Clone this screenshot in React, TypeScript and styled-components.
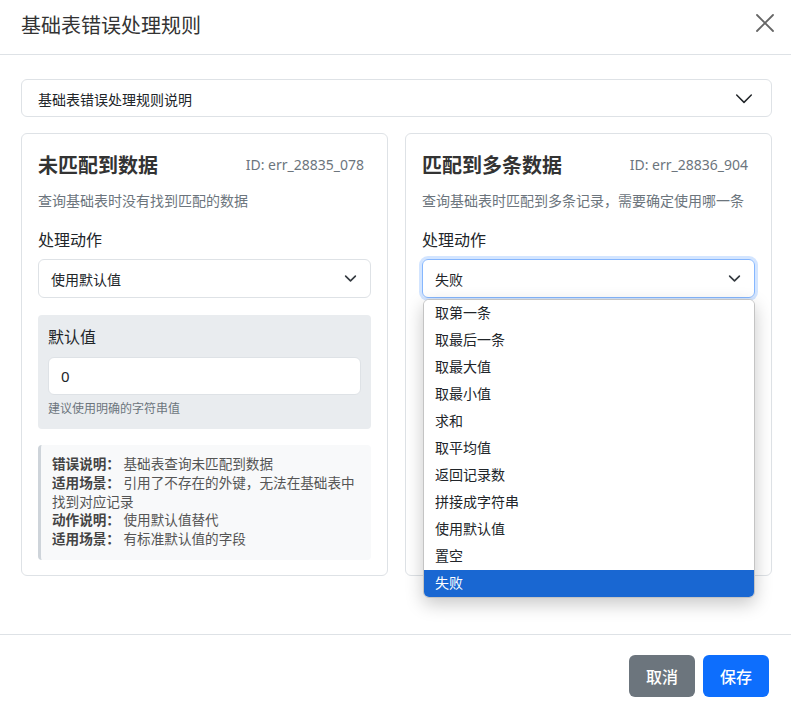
import React from "react";
import styled, { createGlobalStyle } from "styled-components";

const GlobalStyle = createGlobalStyle`
    html, body {
        margin: 0;
        padding: 0;
        background: #fff;
    }
    body {
        font-family: "Noto Sans", "Noto Sans CJK SC", sans-serif;
        color: #212529;
    }
    * {
        box-sizing: border-box;
    }
`;

const OPTIONS = [
    "取第一条",
    "取最后一条",
    "取最大值",
    "取最小值",
    "求和",
    "取平均值",
    "返回记录数",
    "拼接成字符串",
    "使用默认值",
    "置空",
    "失败",
];

function Chevron({ size = 16 }: { size?: number }) {
    return (
        <svg width={size} height={size} viewBox="0 0 16 16" fill="none">
            <path d="M2 5l6 6 6-6" stroke="#343a40" strokeWidth="2" strokeLinecap="round" strokeLinejoin="round" />
        </svg>
    );
}

function AccordionChevron() {
    return (
        <svg width="18" height="18" viewBox="0 0 16 16" fill="none">
            <path d="M1.5 4.5L8 11l6.5-6.5" stroke="#212529" strokeWidth="1.3" strokeLinecap="round" strokeLinejoin="round" />
        </svg>
    );
}

function CloseIcon() {
    return (
        <svg width="18" height="18" viewBox="0 0 18 18" fill="none">
            <path d="M1 1l16 16M17 1L1 17" stroke="#666" strokeWidth="1.8" strokeLinecap="round" />
        </svg>
    );
}

export default function App() {
    return (
        <>
            <GlobalStyle />
            <Modal>
                <Header>
                    <Title>基础表错误处理规则</Title>
                    <CloseButton aria-label="close">
                        <CloseIcon />
                    </CloseButton>
                </Header>
                <Body>
                    <Accordion>
                        <span>基础表错误处理规则说明</span>
                        <AccordionChevron />
                    </Accordion>
                    <Cards>
                        <Card>
                            <TitleRow>
                                <CardTitle>未匹配到数据</CardTitle>
                                <RuleId>ID: err_28835_078</RuleId>
                            </TitleRow>
                            <Desc>查询基础表时没有找到匹配的数据</Desc>
                            <Label>处理动作</Label>
                            <Select>
                                <span>使用默认值</span>
                                <Chevron />
                            </Select>
                            <DefaultBox>
                                <Label>默认值</Label>
                                <Input>0</Input>
                                <Help>建议使用明确的字符串值</Help>
                            </DefaultBox>
                            <InfoBox>
                                <div>
                                    <b>错误说明：</b> 基础表查询未匹配到数据
                                </div>
                                <div>
                                    <b>适用场景：</b> 引用了不存在的外键，无法在基础表中找到对应记录
                                </div>
                                <div>
                                    <b>动作说明：</b> 使用默认值替代
                                </div>
                                <div>
                                    <b>适用场景：</b> 有标准默认值的字段
                                </div>
                            </InfoBox>
                        </Card>
                        <Card>
                            <TitleRow>
                                <CardTitle>匹配到多条数据</CardTitle>
                                <RuleId>ID: err_28836_904</RuleId>
                            </TitleRow>
                            <Desc>查询基础表时匹配到多条记录，需要确定使用哪一条</Desc>
                            <Label>处理动作</Label>
                            <SelectWrap>
                                <Select $focused>
                                    <span>失败</span>
                                    <Chevron />
                                </Select>
                                <Dropdown>
                                    {OPTIONS.map((o) => (
                                        <Option key={o} $selected={o === "失败"}>
                                            {o}
                                        </Option>
                                    ))}
                                </Dropdown>
                            </SelectWrap>
                        </Card>
                    </Cards>
                </Body>
                <Footer>
                    <Button $variant="secondary">取消</Button>
                    <Button $variant="primary">保存</Button>
                </Footer>
            </Modal>
        </>
    );
}

const Modal = styled.div`
    width: 791px;
    height: 710px;
    display: flex;
    flex-direction: column;
    background: #fff;
    overflow: hidden;
`;

const Header = styled.div`
    height: 55px;
    display: flex;
    align-items: center;
    justify-content: space-between;
    padding: 0 17px 2px 21px;
    border-bottom: 1px solid #dee2e6;
`;

const Title = styled.h5`
    margin: 0;
    font-size: 20px;
    font-weight: 400;
    line-height: 24px;
    color: #333;
`;

const CloseButton = styled.button`
    border: 0;
    background: transparent;
    padding: 0;
    width: 18px;
    height: 18px;
    display: flex;
    margin-bottom: 7px;
`;

const Body = styled.div`
    padding: 24px 19px 56px 21px;
    flex: 1;
`;

const Accordion = styled.div`
    height: 38px;
    border: 1px solid #dee2e6;
    border-radius: 6px;
    display: flex;
    align-items: center;
    justify-content: space-between;
    padding: 1px 18px 0 16px;
    font-size: 14px;
    color: #212529;
    margin-bottom: 16px;
`;

const Cards = styled.div`
    display: grid;
    grid-template-columns: 367px 367px;
    gap: 17px;
`;

const Card = styled.div`
    border: 1px solid #dee2e6;
    border-radius: 6px;
    padding: 16px 16px 15px 16px;
    display: flex;
    flex-direction: column;
`;

const TitleRow = styled.div`
    display: flex;
    justify-content: space-between;
    align-items: center;
    height: 28px;
    margin-bottom: 13px;
`;

const CardTitle = styled.div`
    font-size: 20px;
    font-weight: 700;
    color: #333;
`;

const RuleId = styled.div`
    font-size: 14px;
    color: #6c757d;
    margin-right: 7px;
`;

const Desc = styled.div`
    font-size: 14px;
    line-height: 20px;
    color: #6c757d;
    margin-bottom: 18px;
`;

const Label = styled.div`
    font-size: 16px;
    line-height: 22px;
    margin-bottom: 8px;
    color: #212529;
`;

const SelectWrap = styled.div`
    position: relative;
`;

const Select = styled.div<{ $focused?: boolean }>`
    height: 39px;
    border: 1px solid ${(p) => (p.$focused ? "#86b7fe" : "#dee2e6")};
    box-shadow: ${(p) => (p.$focused ? "0 0 0 3px rgba(13, 110, 253, 0.18)" : "none")};
    border-radius: 6px;
    display: flex;
    align-items: center;
    justify-content: space-between;
    padding: 0 13px 0 12px;
    font-size: 14px;
    color: #212529;
    margin-bottom: 17px;
    svg {
        width: 13px;
        height: 13px;
    }
`;

const Dropdown = styled.div`
    position: absolute;
    top: 40px;
    left: 1px;
    right: 0;
    background: #fff;
    border: 1px solid #c4c4c4;
    border-radius: 6px;
    overflow: hidden;
    box-shadow: 0 6px 18px rgba(0, 0, 0, 0.22);
    z-index: 10;
`;

const Option = styled.div<{ $selected?: boolean }>`
    height: 27px;
    display: flex;
    align-items: center;
    padding: 0 0 3px 11px;
    font-size: 14px;
    color: ${(p) => (p.$selected ? "#fff" : "#212529")};
    background: ${(p) => (p.$selected ? "#1967d2" : "#fff")};
`;

const DefaultBox = styled.div`
    background: #e9ecef;
    border-radius: 4px;
    padding: 11px 10px 12px 10px;
    margin-bottom: 16px;
`;

const Input = styled.div`
    height: 38px;
    background: #fff;
    border: 1px solid #dee2e6;
    border-radius: 6px;
    display: flex;
    align-items: center;
    padding: 0 12px;
    font-size: 15px;
    margin-top: 9px;
`;

const Help = styled.div`
    font-size: 12px;
    line-height: 16px;
    color: #6c757d;
    margin-top: 6px;
`;

const InfoBox = styled.div`
    background: #f8f9fa;
    border-left: 3px solid #ced4da;
    border-radius: 4px;
    padding: 10px 11px 11px 11px;
    font-size: 13.6px;
    line-height: 18.75px;
    color: #555;
    b {
        color: #444;
        font-weight: 700;
    }
`;

const Footer = styled.div`
    border-top: 1px solid #dee2e6;
    display: flex;
    justify-content: flex-end;
    gap: 8px;
    padding: 20px 22px 13px;
`;

const Button = styled.button<{ $variant: "primary" | "secondary" }>`
    height: 42px;
    width: 66px;
    border: 0;
    border-radius: 6px;
    font-family: inherit;
    font-size: 16px;
    font-weight: 500;
    color: #fff;
    background: ${(p) => (p.$variant === "primary" ? "#0d6efd" : "#6c757d")};
`;
